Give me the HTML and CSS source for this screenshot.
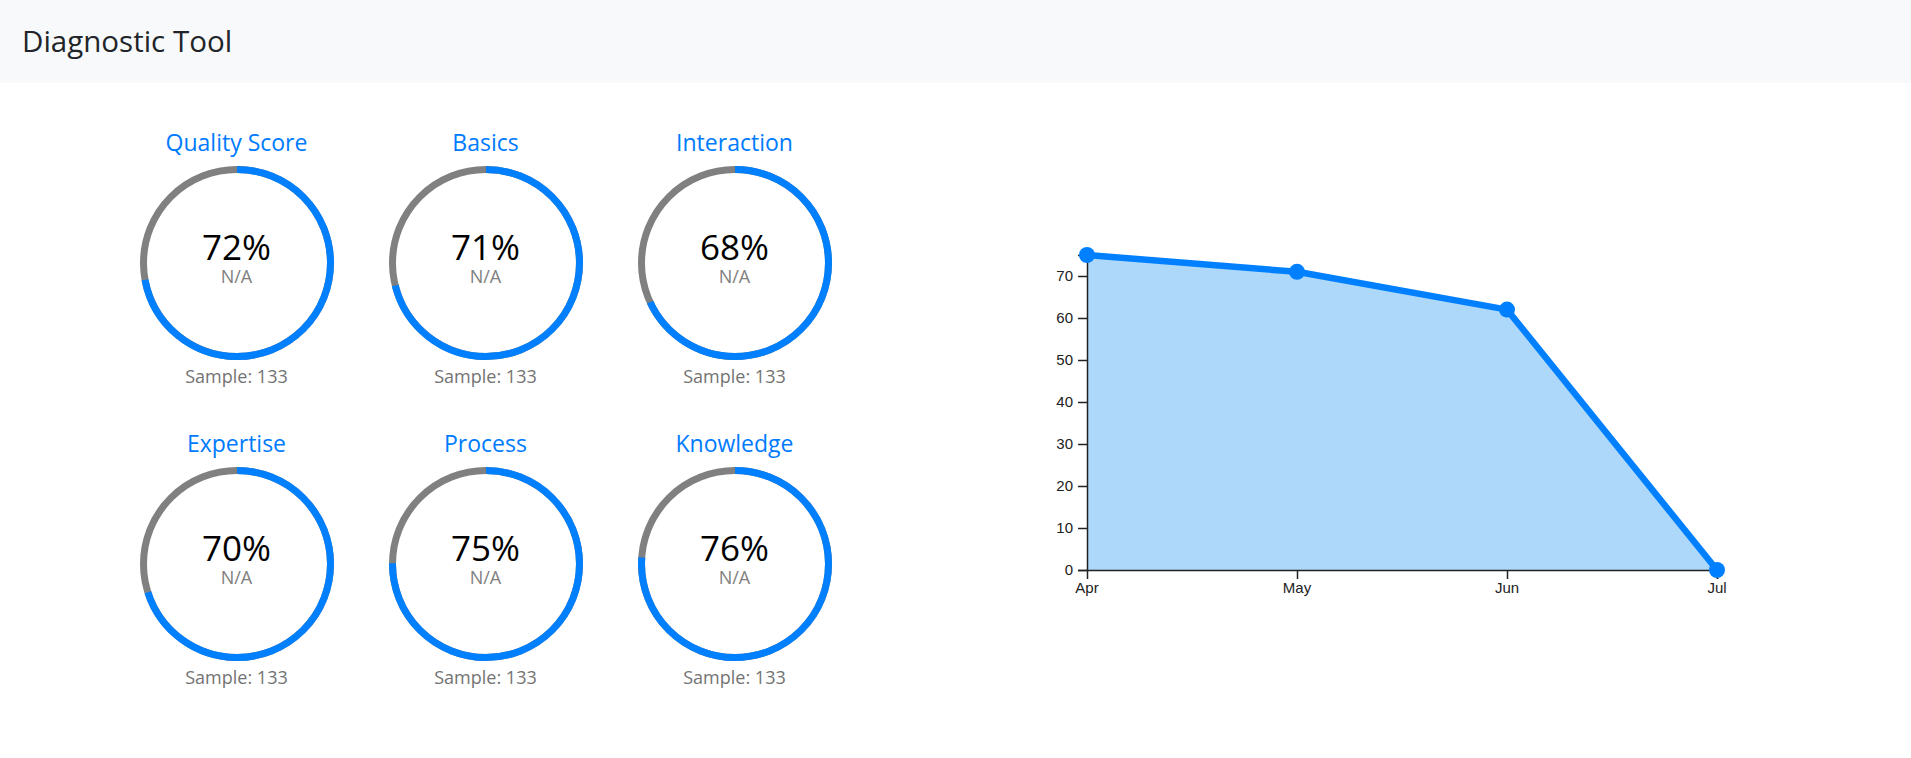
FILE: index.html
```html
<!DOCTYPE html>
<html lang="en">
<head>
<meta charset="utf-8">
<title>Diagnostic Tool</title>
<link rel="stylesheet" href="styles.css">
</head>
<body>
<header class="navbar"><span class="brand">Diagnostic Tool</span></header>
<main class="content">
  <section class="gauges">
    <div class="gauge">
      <div class="gauge-title">Quality Score</div>
      <div class="dial">
        <svg class="ring" width="196" height="196" viewBox="0 0 196 196">
          <circle class="track" cx="98" cy="98" r="93.5"/>
          <circle class="value" cx="98" cy="98" r="93.5" stroke-dasharray="423.0 588" transform="rotate(-90 98 98)"/>
        </svg>
        <div class="readout"><div class="pct">72%</div><div class="na">N/A</div></div>
      </div>
      <div class="sample">Sample: 133</div>
    </div>
    <div class="gauge">
      <div class="gauge-title">Basics</div>
      <div class="dial">
        <svg class="ring" width="196" height="196" viewBox="0 0 196 196">
          <circle class="track" cx="98" cy="98" r="93.5"/>
          <circle class="value" cx="98" cy="98" r="93.5" stroke-dasharray="417.1 588" transform="rotate(-90 98 98)"/>
        </svg>
        <div class="readout"><div class="pct">71%</div><div class="na">N/A</div></div>
      </div>
      <div class="sample">Sample: 133</div>
    </div>
    <div class="gauge">
      <div class="gauge-title">Interaction</div>
      <div class="dial">
        <svg class="ring" width="196" height="196" viewBox="0 0 196 196">
          <circle class="track" cx="98" cy="98" r="93.5"/>
          <circle class="value" cx="98" cy="98" r="93.5" stroke-dasharray="399.5 588" transform="rotate(-90 98 98)"/>
        </svg>
        <div class="readout"><div class="pct">68%</div><div class="na">N/A</div></div>
      </div>
      <div class="sample">Sample: 133</div>
    </div>
    <div class="gauge">
      <div class="gauge-title">Expertise</div>
      <div class="dial">
        <svg class="ring" width="196" height="196" viewBox="0 0 196 196">
          <circle class="track" cx="98" cy="98" r="93.5"/>
          <circle class="value" cx="98" cy="98" r="93.5" stroke-dasharray="411.2 588" transform="rotate(-90 98 98)"/>
        </svg>
        <div class="readout"><div class="pct">70%</div><div class="na">N/A</div></div>
      </div>
      <div class="sample">Sample: 133</div>
    </div>
    <div class="gauge">
      <div class="gauge-title">Process</div>
      <div class="dial">
        <svg class="ring" width="196" height="196" viewBox="0 0 196 196">
          <circle class="track" cx="98" cy="98" r="93.5"/>
          <circle class="value" cx="98" cy="98" r="93.5" stroke-dasharray="440.6 588" transform="rotate(-90 98 98)"/>
        </svg>
        <div class="readout"><div class="pct">75%</div><div class="na">N/A</div></div>
      </div>
      <div class="sample">Sample: 133</div>
    </div>
    <div class="gauge">
      <div class="gauge-title">Knowledge</div>
      <div class="dial">
        <svg class="ring" width="196" height="196" viewBox="0 0 196 196">
          <circle class="track" cx="98" cy="98" r="93.5"/>
          <circle class="value" cx="98" cy="98" r="93.5" stroke-dasharray="446.5 588" transform="rotate(-90 98 98)"/>
        </svg>
        <div class="readout"><div class="pct">76%</div><div class="na">N/A</div></div>
      </div>
      <div class="sample">Sample: 133</div>
    </div>
  </section>
  <section class="chart">
    <svg class="trend" width="760" height="400" viewBox="0 0 760 400">
      <path class="area" d="M58,35 L268,51.8 L478,89.6 L688,350 L58,350 Z"/>
      <g class="axis">
        <path class="domain" d="M49,35.5 H58.5 V350.5 H49"/>
        <path class="domain" d="M58.5,359 V350.5 H688.5 V359"/>
        <g class="ytick"><line x1="49" x2="58" y1="350.5" y2="350.5"/><text x="44" y="350" dy="0.32em">0</text></g>
        <g class="ytick"><line x1="49" x2="58" y1="308.5" y2="308.5"/><text x="44" y="308" dy="0.32em">10</text></g>
        <g class="ytick"><line x1="49" x2="58" y1="266.5" y2="266.5"/><text x="44" y="266" dy="0.32em">20</text></g>
        <g class="ytick"><line x1="49" x2="58" y1="224.5" y2="224.5"/><text x="44" y="224" dy="0.32em">30</text></g>
        <g class="ytick"><line x1="49" x2="58" y1="182.5" y2="182.5"/><text x="44" y="182" dy="0.32em">40</text></g>
        <g class="ytick"><line x1="49" x2="58" y1="140.5" y2="140.5"/><text x="44" y="140" dy="0.32em">50</text></g>
        <g class="ytick"><line x1="49" x2="58" y1="98.5" y2="98.5"/><text x="44" y="98" dy="0.32em">60</text></g>
        <g class="ytick"><line x1="49" x2="58" y1="56.5" y2="56.5"/><text x="44" y="56" dy="0.32em">70</text></g>
        <g class="xtick"><line x1="268.5" x2="268.5" y1="350" y2="359"/><text x="268" y="373">May</text></g>
        <g class="xtick"><line x1="478.5" x2="478.5" y1="350" y2="359"/><text x="478" y="373">Jun</text></g>
        <g class="xtick"><line x1="688.5" x2="688.5" y1="350" y2="359"/><text x="688" y="373">Jul</text></g>
        <g class="xtick"><text x="58" y="373">Apr</text></g>
      </g>
      <path class="line" d="M58,35 L268,51.8 L478,89.6 L688,350"/>
      <circle class="dot" cx="58" cy="35" r="8"/>
      <circle class="dot" cx="268" cy="51.8" r="8"/>
      <circle class="dot" cx="478" cy="89.6" r="8"/>
      <circle class="dot" cx="688" cy="350" r="8"/>
    </svg>
  </section>
</main>
</body>
</html>
```

FILE: styles.css
```css
html, body {
  margin: 0;
  padding: 0;
  background: #ffffff;
}

body {
  font-family: "Open Sans", "Noto Sans", sans-serif;
  color: #212529;
}

.navbar {
  background: #f8f9fa;
  height: 83px;
  box-sizing: border-box;
  padding: 23px 22px 25px;
}

.brand {
  display: block;
  font-size: 29.5px;
  line-height: 35px;
  color: #212529;
}

.content {
  display: flex;
  align-items: flex-start;
  padding-top: 44px;
}

.gauges {
  display: grid;
  grid-template-columns: repeat(3, 249px);
  row-gap: 40px;
  margin-left: 112px;
}

.gauge {
  display: flex;
  flex-direction: column;
  align-items: center;
}

.gauge-title {
  font-size: 23px;
  line-height: 30px;
  color: #007bff;
}

.dial {
  display: grid;
  justify-items: center;
  align-items: center;
  margin-top: 8px;
}

.dial > * {
  grid-area: 1 / 1;
}

.ring {
  display: block;
}

.track {
  fill: none;
  stroke: #808080;
  stroke-width: 7;
}

.value {
  fill: none;
  stroke: #0080ff;
  stroke-width: 7;
}

.readout {
  text-align: center;
  padding-bottom: 10px;
}

.pct {
  font-size: 35px;
  line-height: 36px;
  color: #000000;
}

.na {
  font-size: 18px;
  line-height: 22px;
  color: #808080;
}

.sample {
  margin-top: 3px;
  font-size: 18px;
  line-height: 24px;
  color: #737373;
}

.chart {
  margin-left: 170px;
  padding-top: 93px;
}

.trend {
  display: block;
  overflow: visible;
}

.area {
  fill: #add8f9;
  stroke: none;
}

.line {
  fill: none;
  stroke: #0080ff;
  stroke-width: 6.5;
  stroke-linejoin: round;
}

.dot {
  fill: #0080ff;
}

.axis .domain {
  fill: none;
  stroke: #222;
  stroke-width: 1.5;
}

.axis line {
  stroke: #222;
  stroke-width: 1.5;
}

.axis text {
  font-family: "Liberation Sans", Arial, sans-serif;
  font-size: 15px;
  fill: #222;
}

.ytick text {
  text-anchor: end;
}

.xtick text {
  text-anchor: middle;
}
```
